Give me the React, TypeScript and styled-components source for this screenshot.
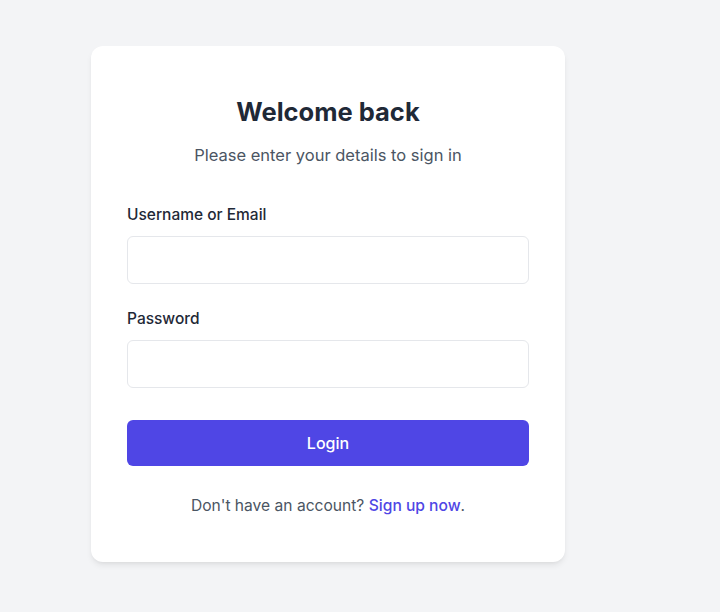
import React from "react";
import styled, { createGlobalStyle } from "styled-components";

const Global = createGlobalStyle`
  html, body { margin: 0; padding: 0; background: #f3f4f6; }
  body { font-family: Inter, "Noto Sans", sans-serif; -webkit-font-smoothing: antialiased; }
  * { box-sizing: border-box; }
`;

const Page = styled.div`
  min-height: 612px;
  padding: 46px 0 0 91px;
`;

const Card = styled.form`
  width: 474px;
  height: 516px;
  background: #ffffff;
  border-radius: 12px;
  box-shadow: 0 4px 6px -1px rgba(0,0,0,0.08), 0 2px 4px -2px rgba(0,0,0,0.06);
  padding: 50px 36px 44px;
  display: flex;
  flex-direction: column;
`;

const Title = styled.h1`
  margin: 0;
  font-size: 25.5px;
  line-height: 32px;
  font-weight: 700;
  color: #1f2937;
  text-align: center;
`;

const Subtitle = styled.p`
  margin: 15px 0 0;
  font-size: 16.5px;
  line-height: 24px;
  color: #4b5563;
  text-align: center;
`;

const Field = styled.div<{ $top: number }>`
  margin-top: ${(p) => p.$top}px;
  display: flex;
  flex-direction: column;
  gap: 11px;
`;

const Label = styled.label`
  font-size: 15.5px;
  line-height: 20px;
  font-weight: 500;
  color: #1f2937;
`;

const Input = styled.input`
  height: 48px;
  width: 100%;
  border: 1px solid #e5e7eb;
  border-radius: 6px;
  padding: 0 12px;
  font-size: 16px;
  font-family: inherit;
  outline: none;
  background: #fff;
`;

const Button = styled.button`
  margin-top: 32px;
  height: 46px;
  width: 100%;
  border: none;
  border-radius: 6px;
  background: #4f46e5;
  color: #ffffff;
  font-family: inherit;
  font-size: 16px;
  font-weight: 500;
  cursor: pointer;
`;

const Footer = styled.p`
  margin: 28px 0 0;
  font-size: 15.6px;
  line-height: 24px;
  color: #4b5563;
  text-align: center;
`;

const Link = styled.a`
  color: #4f46e5;
  font-weight: 500;
  text-decoration: none;
`;

export default function App() {
  return (
    <>
      <Global />
      <Page>
        <Card onSubmit={(e) => e.preventDefault()}>
          <Title>Welcome back</Title>
          <Subtitle>Please enter your details to sign in</Subtitle>
          <Field $top={38}>
            <Label htmlFor="user">Username or Email</Label>
            <Input id="user" type="text" />
          </Field>
          <Field $top={25}>
            <Label htmlFor="pass">Password</Label>
            <Input id="pass" type="password" />
          </Field>
          <Button type="submit">Login</Button>
          <Footer>
            Don't have an account? <Link href="#">Sign up now</Link>.
          </Footer>
        </Card>
      </Page>
    </>
  );
}
